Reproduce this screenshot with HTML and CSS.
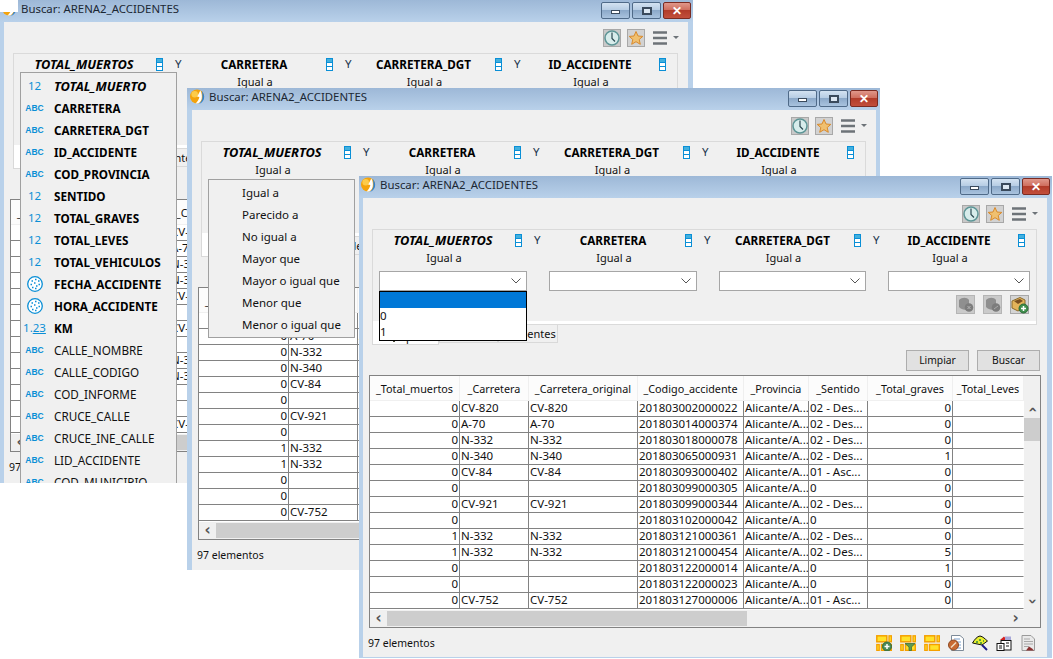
FILE: index.html
```html
<!DOCTYPE html>
<html lang="es">
<head>
<meta charset="utf-8">
<title>Buscar: ARENA2_ACCIDENTES</title>
<link rel="stylesheet" href="styles.css">
</head>
<body>
<svg class="defs" width="0" height="0" aria-hidden="true">
  <defs>
    <symbol id="logo" viewBox="0 0 16 16">
      <circle cx="7.500" cy="8" r="7.500" fill="#f4a30c"/>
      <circle cx="5" cy="5.500" r="3.500" fill="#fccb4a"/>
      <path d="M11 1.500 C9.500 4 9 6 7.500 8 L10 8.500 C9.500 11 8 13.500 6 15.500 C10 15.500 12 13 12.500 10 C13 7 12.500 4 11 1.500Z" fill="#fff"/>
      <path d="M12.500 2 C15.500 5 16 10 13.500 13 C12.500 14.500 11 15.500 9.500 15.800 C12 14 13.200 11.500 13.300 8.500 C13.300 6 13 4 12.500 2Z" fill="#2d82d6"/>
    </symbol>
    <symbol id="clock" viewBox="0 0 18 18">
      <rect x=".5" y=".5" width="17" height="17" fill="#c9c9c9" stroke="#a8a8a8"/>
      <circle cx="9" cy="9" r="7" fill="#d7eceb" stroke="#5d9596" stroke-width="1.500"/>
      <path d="M9 3.500 V9.500 L12 12.500" fill="none" stroke="#2c4a52" stroke-width="1.200"/>
    </symbol>
    <symbol id="star" viewBox="0 0 18 18">
      <rect x=".5" y=".5" width="17" height="17" fill="#d2d2d2" stroke="#a8a8a8"/>
      <path d="M9 2.500 L11 7 L15.800 7.400 L12.200 10.500 L13.300 15.300 L9 12.700 L4.700 15.300 L5.800 10.500 L2.200 7.400 L7 7Z" fill="#f0c070" stroke="#d98a2c"/>
    </symbol>
    <symbol id="menu" viewBox="0 0 26 14">
      <path d="M0 1.500 H14 M0 7 H14 M0 12.500 H14" stroke="#6d7378" stroke-width="2.400"/>
      <path d="M20 5 H26 L23 8Z" fill="#6d7378"/>
    </symbol>
    <symbol id="order" viewBox="0 0 7 13">
      <rect x=".5" y=".5" width="6" height="12" fill="#fff" stroke="#0a8fd6"/>
      <rect x="1" y="1" width="5" height="3.500" fill="#42b0de"/>
      <path d="M1 4.500 H6 M1 8.500 H6" stroke="#0a8fd6"/>
    </symbol>
    <symbol id="chev" viewBox="0 0 10 6">
      <path d="M.5 .5 L5 5 L9.500 .5" fill="none" stroke="#555"/>
    </symbol>
    <symbol id="date" viewBox="0 0 16 16">
      <circle cx="8" cy="8" r="7.300" fill="#fff" stroke="#0a8fd6" stroke-width="1.300"/>
      <path d="M4.500 5 h1.500 M8 3.500 h1.500 M11 5 h1.500 M3.500 8.500 h1.500 M7 7 h1.500 M9 10 h1.500 M11.500 8.500 h1.500 M5 11.500 h1.500 M8 12.500 h1.500" stroke="#0a8fd6" stroke-width="1.500"/>
    </symbol>
    <symbol id="dbdel" viewBox="0 0 19 19">
      <rect x=".5" y=".5" width="18" height="18" fill="#cacaca" stroke="#b5b5b5"/>
      <path d="M3 5 C6 2 11 2 13 5 V13 C10 16 6 15 3 12Z" fill="#8f8f8f"/>
      <circle cx="13" cy="12.500" r="4.300" fill="#7c7c7c"/>
      <path d="M11.500 11 L14.500 14 M14.500 11 L11.500 14" stroke="#b5b5b5"/>
    </symbol>
    <symbol id="dbedit" viewBox="0 0 19 19">
      <rect x=".5" y=".5" width="18" height="18" fill="#cacaca" stroke="#b5b5b5"/>
      <path d="M3 5 C6 2 11 2 13 5 V13 C10 16 6 15 3 12Z" fill="#8f8f8f"/>
      <circle cx="13" cy="12.500" r="4.300" fill="#7c7c7c"/>
      <path d="M11 14 L15 11" stroke="#aaa"/>
    </symbol>
    <symbol id="dbadd" viewBox="0 0 19 19">
      <rect x=".5" y=".5" width="18" height="18" fill="#d4d4d4" stroke="#a8a8a8"/>
      <path d="M2 6 L10 2.500 L15 5 V12 L8 16 L2 13Z" fill="#e3b35a" stroke="#8a6a2a"/>
      <path d="M4 6 L10 4 L13 6 L8 9Z" fill="#7a4f20"/>
      <circle cx="13.500" cy="13.500" r="4.500" fill="#3f8f4c" stroke="#2a6b38"/>
      <path d="M13.500 11 V16 M11 13.500 H16" stroke="#fff" stroke-width="1.500"/>
    </symbol>
    <symbol id="tabicon" viewBox="0 0 16 14">
      <rect x="1" y="2" width="13" height="10" fill="#f3e9b0" stroke="#8a7a3a"/>
      <rect x="0" y="7" width="2" height="1" fill="#f2df6a"/>
      <rect x="14" y="12" width="2" height="2" fill="#4a4a3a"/>
    </symbol>
    <symbol id="lay" viewBox="0 0 16 16">
      <rect x=".8" y=".8" width="10" height="6" fill="#ffe22a" stroke="#f5a000" stroke-width="1.500"/>
      <rect x="13" y=".8" width="2.400" height="6" fill="#ffe22a" stroke="#f5a000" stroke-width="1.300"/>
      <rect x=".8" y="9.500" width="2.400" height="6" fill="#ffe22a" stroke="#f5a000" stroke-width="1.300"/>
      <rect x="5.500" y="9.500" width="9.800" height="6" fill="#ffe22a" stroke="#f5a000" stroke-width="1.500"/>
    </symbol>
    <symbol id="layadd" viewBox="0 0 16 16">
      <use href="#lay"/>
      <circle cx="11" cy="11.500" r="4.500" fill="#4c8a58" stroke="#2f6a3e"/>
      <path d="M11 9 V14 M8.500 11.500 H13.500" stroke="#fff" stroke-width="1.500"/>
    </symbol>
    <symbol id="layfil" viewBox="0 0 16 16">
      <use href="#lay"/>
      <path d="M5 8.500 H15 L11.500 12 V15.500 H9 V12Z" fill="#5f9a52" stroke="#3f7238" stroke-width=".8"/>
    </symbol>
    <symbol id="report" viewBox="0 0 16 16">
      <path d="M3.500 .5 H12 L15.500 3.500 V15.500 H3.500Z" fill="#fff" stroke="#7d8a98"/>
      <path d="M6 4 H12 M8 7 H13 M9 10 H13 M8 13 H13" stroke="#7aa0cc"/>
      <circle cx="5.500" cy="10" r="5" fill="#c96a32" stroke="#8d4a24"/>
      <path d="M3 12.500 L8 7.500" stroke="#f0e0c8" stroke-width="1.500"/>
    </symbol>
    <symbol id="find" viewBox="0 0 16 16">
      <path d="M.5 8 C3 4 5 1.500 8 1 C11 1.500 13 4 15.500 6 L10 10 Z" fill="#e8ef30" stroke="#111"/>
      <path d="M4 7 h2 M7 5 h2 M8 8 h2 M11 6 h1" stroke="#2f8a3e" stroke-width="1.400"/>
      <path d="M10 10 L15 15" stroke="#1a1a8a" stroke-width="2"/>
    </symbol>
    <symbol id="map" viewBox="0 0 16 16">
      <path d="M4 5 L8 1.500 L11 5Z" fill="#d32020"/>
      <rect x="9" y="1.500" width="6" height="4" fill="#a8a8d8"/>
      <rect x="5" y="5.500" width="10" height="9.500" fill="#fff" stroke="#111"/>
      <rect x="1" y="8.500" width="7" height="7" fill="#fff" stroke="#111"/>
      <path d="M3 11 h3 M3 13 h3 M10 8 h3 M10 11 h3" stroke="#111"/>
    </symbol>
    <symbol id="sheet" viewBox="0 0 16 16">
      <path d="M2 .5 H11 L14.500 4 V15.500 H2Z" fill="#e9e9e9" stroke="#9a9a9a"/>
      <path d="M4 4 H10 M4 6.500 H13 M4 9 H13 M4 11.500 H9" stroke="#a8a8a8"/>
      <path d="M6 15.500 L9 11.500 L12 13.500 L14 15.500Z" fill="#8a2f2f"/>
    </symbol>
  </defs>
</svg>

<section class="window win-a">
  <div class="redact"></div>
  <header class="titlebar">
    <svg class="logo"><use href="#logo"/></svg>
    <span class="title">Buscar: ARENA2_ACCIDENTES</span>
    <span class="ctrl"><i class="glyph-min"></i></span>
    <span class="ctrl"><i class="glyph-max"></i></span>
    <span class="ctrl close"><i class="glyph-x">✕</i></span>
  </header>
  <div class="body">
    <div class="toolbar">
      <svg class="tool"><use href="#clock"/></svg>
      <svg class="tool"><use href="#star"/></svg>
      <svg class="tool-menu"><use href="#menu"/></svg>
    </div>
    <div class="panel">
      <div class="filters">
        <div class="filter"><div class="fhead"><b class="fname key">TOTAL_MUERTOS</b><svg class="order"><use href="#order"/></svg></div><div class="op">Igual a</div></div>
        <span class="and">Y</span>
        <div class="filter"><div class="fhead"><b class="fname">CARRETERA</b><svg class="order"><use href="#order"/></svg></div><div class="op">Igual a</div></div>
        <span class="and">Y</span>
        <div class="filter"><div class="fhead"><b class="fname">CARRETERA_DGT</b><svg class="order"><use href="#order"/></svg></div><div class="op">Igual a</div></div>
        <span class="and">Y</span>
        <div class="filter"><div class="fhead"><b class="fname">ID_ACCIDENTE</b><svg class="order"><use href="#order"/></svg></div><div class="op">Igual a</div></div>
      </div>
    </div>
    <div class="tabs"><span class="tab on"><svg class="tabicon"><use href="#tabicon"/></svg>Tipo</span><span class="tab">Avanzado</span><span class="tab">Accidentes</span></div>
    <div class="actions"><span class="btn">Limpiar</span><span class="btn">Buscar</span></div>
    <div class="grid">
      <div class="grid-main">
        <table class="data">
          <colgroup><col class="c1"><col class="c2"><col class="c3"></colgroup>
          <thead><tr><th>_Total_muertos</th><th>_Carretera</th><th>_Carretera_original</th></tr></thead>
          <tbody>
            <tr><td class="n">0</td><td>CV-820</td><td>CV-820</td></tr>
            <tr><td class="n">0</td><td>A-70</td><td>A-70</td></tr>
            <tr><td class="n">0</td><td>N-332</td><td>N-332</td></tr>
            <tr><td class="n">0</td><td>N-340</td><td>N-340</td></tr>
            <tr><td class="n">0</td><td>CV-84</td><td>CV-84</td></tr>
            <tr><td class="n">0</td><td></td><td></td></tr>
            <tr><td class="n">0</td><td>CV-921</td><td>CV-921</td></tr>
            <tr><td class="n">0</td><td></td><td></td></tr>
            <tr><td class="n">1</td><td>N-332</td><td>N-332</td></tr>
            <tr><td class="n">1</td><td>N-332</td><td>N-332</td></tr>
            <tr><td class="n">0</td><td></td><td></td></tr>
            <tr><td class="n">0</td><td></td><td></td></tr>
            <tr><td class="n">0</td><td>CV-752</td><td>CV-752</td></tr>
          </tbody>
        </table>
      </div>
      <div class="hscroll"><span class="arrow">‹</span><span class="thumb"></span></div>
    </div>
    <div class="status"><span>97 elementos</span></div>
  </div>
  <ul class="menu menu-fields">
    <li class="key"><i class="num">12</i>TOTAL_MUERTO</li>
    <li class="strong"><i class="abc">ABC</i>CARRETERA</li>
    <li class="strong"><i class="abc">ABC</i>CARRETERA_DGT</li>
    <li class="strong"><i class="abc">ABC</i>ID_ACCIDENTE</li>
    <li class="strong"><i class="abc">ABC</i>COD_PROVINCIA</li>
    <li class="strong"><i class="num">12</i>SENTIDO</li>
    <li class="strong"><i class="num">12</i>TOTAL_GRAVES</li>
    <li class="strong"><i class="num">12</i>TOTAL_LEVES</li>
    <li class="strong"><i class="num">12</i>TOTAL_VEHICULOS</li>
    <li class="strong"><i class="ico"><svg class="date"><use href="#date"/></svg></i>FECHA_ACCIDENTE</li>
    <li class="strong"><i class="ico"><svg class="date"><use href="#date"/></svg></i>HORA_ACCIDENTE</li>
    <li class="strong"><i class="num">1.<u>23</u></i>KM</li>
    <li><i class="abc">ABC</i>CALLE_NOMBRE</li>
    <li><i class="abc">ABC</i>CALLE_CODIGO</li>
    <li><i class="abc">ABC</i>COD_INFORME</li>
    <li><i class="abc">ABC</i>CRUCE_CALLE</li>
    <li><i class="abc">ABC</i>CRUCE_INE_CALLE</li>
    <li><i class="abc">ABC</i>LID_ACCIDENTE</li>
    <li><i class="abc">ABC</i>COD_MUNICIPIO</li>
  </ul>
</section>

<section class="window win-b">
  <header class="titlebar">
    <svg class="logo"><use href="#logo"/></svg>
    <span class="title">Buscar: ARENA2_ACCIDENTES</span>
    <span class="ctrl"><i class="glyph-min"></i></span>
    <span class="ctrl"><i class="glyph-max"></i></span>
    <span class="ctrl close"><i class="glyph-x">✕</i></span>
  </header>
  <div class="body">
    <div class="toolbar">
      <svg class="tool"><use href="#clock"/></svg>
      <svg class="tool"><use href="#star"/></svg>
      <svg class="tool-menu"><use href="#menu"/></svg>
    </div>
    <div class="panel">
      <div class="filters">
        <div class="filter"><div class="fhead"><b class="fname key">TOTAL_MUERTOS</b><svg class="order"><use href="#order"/></svg></div><div class="op">Igual a</div></div>
        <span class="and">Y</span>
        <div class="filter"><div class="fhead"><b class="fname">CARRETERA</b><svg class="order"><use href="#order"/></svg></div><div class="op">Igual a</div></div>
        <span class="and">Y</span>
        <div class="filter"><div class="fhead"><b class="fname">CARRETERA_DGT</b><svg class="order"><use href="#order"/></svg></div><div class="op">Igual a</div></div>
        <span class="and">Y</span>
        <div class="filter"><div class="fhead"><b class="fname">ID_ACCIDENTE</b><svg class="order"><use href="#order"/></svg></div><div class="op">Igual a</div></div>
      </div>
    </div>
    <div class="tabs"><span class="tab on"><svg class="tabicon"><use href="#tabicon"/></svg>Tipo</span><span class="tab">Avanzado</span><span class="tab">Accidentes</span></div>
    <div class="actions"><span class="btn">Limpiar</span><span class="btn">Buscar</span></div>
    <div class="grid">
      <div class="grid-main">
        <table class="data">
          <colgroup><col class="c1"><col class="c2"><col class="c3"></colgroup>
          <thead><tr><th>_Total_muertos</th><th>_Carretera</th><th>_Carretera_original</th></tr></thead>
          <tbody>
            <tr><td class="n">0</td><td>CV-820</td><td>CV-820</td></tr>
            <tr><td class="n">0</td><td>A-70</td><td>A-70</td></tr>
            <tr><td class="n">0</td><td>N-332</td><td>N-332</td></tr>
            <tr><td class="n">0</td><td>N-340</td><td>N-340</td></tr>
            <tr><td class="n">0</td><td>CV-84</td><td>CV-84</td></tr>
            <tr><td class="n">0</td><td></td><td></td></tr>
            <tr><td class="n">0</td><td>CV-921</td><td>CV-921</td></tr>
            <tr><td class="n">0</td><td></td><td></td></tr>
            <tr><td class="n">1</td><td>N-332</td><td>N-332</td></tr>
            <tr><td class="n">1</td><td>N-332</td><td>N-332</td></tr>
            <tr><td class="n">0</td><td></td><td></td></tr>
            <tr><td class="n">0</td><td></td><td></td></tr>
            <tr><td class="n">0</td><td>CV-752</td><td>CV-752</td></tr>
          </tbody>
        </table>
      </div>
      <div class="hscroll"><span class="arrow">‹</span><span class="thumb"></span></div>
    </div>
    <div class="status"><span>97 elementos</span></div>
  </div>
  <ul class="menu menu-ops">
    <li>Igual a</li>
    <li>Parecido a</li>
    <li>No igual a</li>
    <li>Mayor que</li>
    <li>Mayor o igual que</li>
    <li>Menor que</li>
    <li>Menor o igual que</li>
  </ul>
</section>

<section class="window win-c">
  <header class="titlebar">
    <svg class="logo"><use href="#logo"/></svg>
    <span class="title">Buscar: ARENA2_ACCIDENTES</span>
    <span class="ctrl"><i class="glyph-min"></i></span>
    <span class="ctrl"><i class="glyph-max"></i></span>
    <span class="ctrl close"><i class="glyph-x">✕</i></span>
  </header>
  <div class="body">
    <div class="toolbar">
      <svg class="tool"><use href="#clock"/></svg>
      <svg class="tool"><use href="#star"/></svg>
      <svg class="tool-menu"><use href="#menu"/></svg>
    </div>
    <div class="panel">
      <div class="filters">
        <div class="filter"><div class="fhead"><b class="fname key">TOTAL_MUERTOS</b><svg class="order"><use href="#order"/></svg></div><div class="op">Igual a</div><div class="combo"><svg class="chev"><use href="#chev"/></svg></div></div>
        <span class="and">Y</span>
        <div class="filter"><div class="fhead"><b class="fname">CARRETERA</b><svg class="order"><use href="#order"/></svg></div><div class="op">Igual a</div><div class="combo"><svg class="chev"><use href="#chev"/></svg></div></div>
        <span class="and">Y</span>
        <div class="filter"><div class="fhead"><b class="fname">CARRETERA_DGT</b><svg class="order"><use href="#order"/></svg></div><div class="op">Igual a</div><div class="combo"><svg class="chev"><use href="#chev"/></svg></div></div>
        <span class="and">Y</span>
        <div class="filter"><div class="fhead"><b class="fname">ID_ACCIDENTE</b><svg class="order"><use href="#order"/></svg></div><div class="op">Igual a</div><div class="combo"><svg class="chev"><use href="#chev"/></svg></div></div>
      </div>
      <div class="dbtools">
        <svg class="db"><use href="#dbdel"/></svg>
        <svg class="db"><use href="#dbedit"/></svg>
        <svg class="db"><use href="#dbadd"/></svg>
      </div>
    </div>
    <div class="tabs"><span class="tab on"><svg class="tabicon"><use href="#tabicon"/></svg>Tipo</span><span class="tab">Avanzado</span><span class="tab">Accidentes</span></div>
    <div class="actions"><span class="btn">Limpiar</span><span class="btn">Buscar</span></div>
    <div class="grid">
      <div class="grid-main">
        <table class="data full">
          <colgroup><col class="c1"><col class="c2"><col class="c3"><col class="c4"><col class="c5"><col class="c6"><col class="c7"><col class="c8"></colgroup>
          <thead><tr><th>_Total_muertos</th><th>_Carretera</th><th>_Carretera_original</th><th>_Codigo_accidente</th><th>_Provincia</th><th>_Sentido</th><th>_Total_graves</th><th>_Total_Leves</th></tr></thead>
          <tbody>
            <tr><td class="n">0</td><td>CV-820</td><td>CV-820</td><td>201803002000022</td><td>Alicante/A...</td><td>02 - Des...</td><td class="n">0</td><td></td></tr>
            <tr><td class="n">0</td><td>A-70</td><td>A-70</td><td>201803014000374</td><td>Alicante/A...</td><td>02 - Des...</td><td class="n">0</td><td></td></tr>
            <tr><td class="n">0</td><td>N-332</td><td>N-332</td><td>201803018000078</td><td>Alicante/A...</td><td>02 - Des...</td><td class="n">0</td><td></td></tr>
            <tr><td class="n">0</td><td>N-340</td><td>N-340</td><td>201803065000931</td><td>Alicante/A...</td><td>02 - Des...</td><td class="n">1</td><td></td></tr>
            <tr><td class="n">0</td><td>CV-84</td><td>CV-84</td><td>201803093000402</td><td>Alicante/A...</td><td>01 - Asc...</td><td class="n">0</td><td></td></tr>
            <tr><td class="n">0</td><td></td><td></td><td>201803099000305</td><td>Alicante/A...</td><td>0</td><td class="n">0</td><td></td></tr>
            <tr><td class="n">0</td><td>CV-921</td><td>CV-921</td><td>201803099000344</td><td>Alicante/A...</td><td>02 - Des...</td><td class="n">0</td><td></td></tr>
            <tr><td class="n">0</td><td></td><td></td><td>201803102000042</td><td>Alicante/A...</td><td>0</td><td class="n">0</td><td></td></tr>
            <tr><td class="n">1</td><td>N-332</td><td>N-332</td><td>201803121000361</td><td>Alicante/A...</td><td>02 - Des...</td><td class="n">0</td><td></td></tr>
            <tr><td class="n">1</td><td>N-332</td><td>N-332</td><td>201803121000454</td><td>Alicante/A...</td><td>02 - Des...</td><td class="n">5</td><td></td></tr>
            <tr><td class="n">0</td><td></td><td></td><td>201803122000014</td><td>Alicante/A...</td><td>0</td><td class="n">1</td><td></td></tr>
            <tr><td class="n">0</td><td></td><td></td><td>201803122000023</td><td>Alicante/A...</td><td>0</td><td class="n">0</td><td></td></tr>
            <tr><td class="n">0</td><td>CV-752</td><td>CV-752</td><td>201803127000006</td><td>Alicante/A...</td><td>01 - Asc...</td><td class="n">0</td><td></td></tr>
          </tbody>
        </table>
        <div class="vscroll"><span class="arrow up">‹</span><span class="vthumb"></span><span class="arrow down">‹</span></div>
      </div>
      <div class="hscroll"><span class="arrow">‹</span><span class="thumb"></span><span class="arrow right">›</span></div>
    </div>
    <div class="status">
      <span>97 elementos</span>
      <div class="status-icons">
        <svg class="sicon"><use href="#layadd"/></svg>
        <svg class="sicon"><use href="#layfil"/></svg>
        <svg class="sicon"><use href="#lay"/></svg>
        <svg class="sicon"><use href="#report"/></svg>
        <svg class="sicon"><use href="#find"/></svg>
        <svg class="sicon"><use href="#map"/></svg>
        <svg class="sicon"><use href="#sheet"/></svg>
      </div>
    </div>
  </div>
  <ul class="dropdown">
    <li class="sel">&nbsp;</li>
    <li>0</li>
    <li>1</li>
  </ul>
</section>
</body>
</html>
```

FILE: styles.css
```css
* { box-sizing: border-box; }
html, body { margin: 0; height: 100%; }
body {
  position: relative;
  overflow: hidden;
  background: #fff;
  font-family: "Noto Sans", "Liberation Sans", sans-serif;
  font-size: 11px;
  color: #111;
}
.defs { position: absolute; }

.window {
  position: absolute;
  width: 693px;
  height: 482px;
  overflow: hidden;
  display: flex;
  flex-direction: column;
  background: #b9d1ea;
}
.win-a { left: 0; top: 0; height: 483px; }
.win-b { left: 187px; top: 88px; }
.win-c { left: 359px; top: 176px; }
.redact { position: absolute; left: 0; top: 0; width: 18px; height: 12px; background: #fff; z-index: 3; }

.titlebar {
  flex: none;
  height: 22px;
  display: flex;
  align-items: flex-start;
  padding-right: 2px;
  background: linear-gradient(#9db8d7, #b9d1ea);
}
.logo { width: 15px; height: 15px; margin: 1px 0 0 2px; flex: none; }
.win-b .logo { margin-left: 3px; }
.title { flex: 1; margin: 1px 0 0 4px; font-size: 11.400px; line-height: 16px; color: #1b2733; }
.ctrl {
  flex: none;
  width: 29px;
  height: 17px;
  margin: 2px 0 0 2px;
  border: 1px solid #4f6a88;
  border-radius: 2px;
  background: linear-gradient(#d3e2f1 0, #b7cde4 45%, #8ca9c9 50%, #a9c3de 100%);
  display: flex;
  align-items: center;
  justify-content: center;
}
.ctrl.close {
  width: 28px;
  border-color: #7a2b22;
  background: linear-gradient(#e0978a 0, #cf6f5f 45%, #b23c2a 50%, #c24f3c 100%);
}
.glyph-min { width: 9px; height: 4px; margin-top: 3px; background: #fff; border: 1px solid #3a4a5c; }
.glyph-max { width: 10px; height: 8px; background: #dce7f2; border: 2px solid #3a4a5c; }
.glyph-x { font-style: normal; font-weight: 700; font-size: 12px; line-height: 12px; color: #fff; }

.body {
  flex: 1;
  min-height: 0;
  margin: 0 5px 0 4px;
  background: #f0f0f0;
  display: flex;
  flex-direction: column;
}
.win-b .body { margin: 0 4px 0 5px; }
.win-c .body { margin-bottom: 1px; }
.toolbar {
  flex: none;
  height: 31px;
  display: flex;
  align-items: flex-start;
  justify-content: flex-end;
  padding: 7px 9px 0 0;
}
.tool { width: 18px; height: 18px; margin-left: 6px; }
.tool-menu { width: 26px; height: 14px; margin: 2px 0 0 8px; }

.panel {
  flex: none;
  height: 96px;
  margin: 0 10px 0 9px;
  border: 1px solid #dadada;
  background: linear-gradient(#f0f0f0 91px, #fff 91px);
}
.filters {
  display: grid;
  grid-template-columns: 148px 22px 148px 22px 147px 22px 142px;
  padding-left: 6px;
}
.filter { min-width: 0; }
.fhead { height: 20px; display: flex; align-items: center; }
.fname { flex: 1; text-align: center; padding-right: 8px; font-size: 11.700px; color: #000; white-space: nowrap; }
.fname.key { font-size: 12.800px; font-style: italic; }
.order { width: 7px; height: 13px; margin-right: 5px; flex: none; }
.op { height: 19px; line-height: 16px; padding-right: 18px; text-align: center; font-size: 11px; }
.and { height: 20px; line-height: 20px; padding-left: 7px; font-size: 11.500px; color: #20344c; }
.combo {
  height: 20px;
  margin-top: 2px;
  border: 1px solid #a6a6a6;
  background: #fff;
  display: flex;
  align-items: center;
  justify-content: flex-end;
  padding-right: 5px;
}
.chev { width: 10px; height: 6px; }
.dbtools { display: flex; justify-content: flex-end; gap: 8px; margin: 4px 7px 0 0; }
.db { width: 19px; height: 19px; }

.tabs { flex: none; height: 20px; display: flex; margin-left: 9px; font-size: 11px; }
.tab {
  width: 59px;
  height: 18px;
  border: 1px solid #d9d9d9;
  border-top: 0;
  text-align: center;
  line-height: 17px;
  white-space: nowrap;
  overflow: hidden;
}
.tab:last-child { width: 60px; }
.tab.on {
  width: 67px;
  height: 24px;
  margin-top: -4px;
  padding: 7px 0 0 6px;
  background: #fff;
  text-align: left;
  display: flex;
  align-items: flex-start;
}
.tabicon { width: 16px; height: 14px; flex: none; margin-right: 2px; }

.actions { flex: none; height: 25px; margin-top: 5px; display: flex; justify-content: flex-end; gap: 8px; padding-right: 7px; }
.btn {
  width: 63px;
  height: 21px;
  border: 1px solid #adadad;
  background: #e1e1e1;
  text-align: center;
  line-height: 19px;
  font-size: 10.300px;
}

.grid {
  flex: none;
  height: 253px;
  margin: 0 6px;
  border: 1px solid #828282;
  background: #f0f0f0;
  display: flex;
  flex-direction: column;
  overflow: hidden;
}
.grid-main { flex: 1; min-height: 0; display: flex; overflow: hidden; background: #fff; }
.data {
  flex: none;
  table-layout: fixed;
  width: 268px;
  border-collapse: separate;
  border-spacing: 0;
  align-self: flex-start;
  font-size: 11.500px;
  color: #111;
}
.data.full { width: 654px; margin-right: -1px; }
.c1 { width: 90px; }
.c2 { width: 69px; }
.c3 { width: 109px; }
.c4 { width: 106px; }
.c5 { width: 65px; }
.c6 { width: 59px; }
.c7 { width: 85px; }
.c8 { width: 71px; }
.data th {
  height: 25px;
  padding: 0;
  background: #fcfcfc;
  border-right: 1px solid #efefef;
  border-bottom: 1px solid #f0f0f0;
  font-size: 10.800px;
  font-weight: 400;
  text-align: center;
  white-space: nowrap;
  overflow: hidden;
}
.data td {
  height: 16px;
  line-height: 14px;
  padding: 0 1px 1px;
  border-right: 1px solid #828282;
  border-bottom: 1px solid #828282;
  white-space: nowrap;
  overflow: hidden;
}
.data td.n { text-align: right; }
.data td:last-child { border-right: 1px solid #fff; }

.vscroll { flex: none; width: 16px; margin-left: auto; padding-top: 25px; background: #f0f0f0; display: flex; flex-direction: column; align-items: stretch; }
.vthumb { flex: none; height: 23px; background: #cdcdcd; }
.hscroll { flex: none; height: 17px; display: flex; align-items: center; background: #f0f0f0; }
.thumb { width: 360px; height: 15px; background: #cdcdcd; }
.arrow { flex: none; width: 17px; text-align: center; font-family: "DejaVu Sans", sans-serif; font-weight: 700; font-size: 15px; line-height: 15px; color: #555; }
.arrow.right { margin-left: auto; margin-right: 16px; }
.arrow.up { width: 16px; height: 17px; line-height: 17px; transform: rotate(90deg); }
.arrow.down { width: 16px; height: 17px; line-height: 17px; margin-top: auto; transform: rotate(-90deg); }

.status { flex: 1; min-height: 0; display: flex; align-items: flex-start; justify-content: space-between; padding: 7px 11px 0 5px; line-height: 16px; font-size: 10.500px; }
.status-icons { display: flex; gap: 8px; }
.sicon { width: 16px; height: 16px; }

.menu {
  position: absolute;
  margin: 0;
  padding: 2px 0;
  list-style: none;
  border: 1px solid #a0a0a0;
  background: #f0f0f0;
  font-size: 11.500px;
  color: #111;
  z-index: 2;
}
.menu li { height: 22px; line-height: 22px; display: flex; align-items: center; white-space: nowrap; }
.menu i { flex: none; width: 33px; font-style: normal; color: #0a8fd6; display: flex; justify-content: center; padding-right: 6px; }
.menu-fields { left: 20px; top: 72px; width: 157px; height: 440px; }
.menu-fields li { font-size: 11.700px; }
.menu-fields li.strong { font-weight: 700; color: #000; }
.menu-fields li.key { font-size: 12.800px; font-weight: 700; font-style: italic; color: #000; }
.menu .num { font-size: 11.500px; font-weight: 400; }
.menu .abc { font-size: 8.500px; font-weight: 700; font-family: "Liberation Sans", sans-serif; }
.menu .ico { height: 16px; }
.date { width: 16px; height: 16px; }
.menu-ops { left: 21px; top: 91px; width: 147px; height: 159px; padding-left: 33px; }

.dropdown {
  position: absolute;
  left: 20px;
  top: 115px;
  width: 148px;
  height: 50px;
  margin: 0;
  padding: 0;
  list-style: none;
  border: 1px solid #000;
  background: #fff;
  font-size: 11.500px;
  color: #111;
  z-index: 2;
}
.dropdown li { height: 16px; line-height: 16px; }
.dropdown .sel { background: #0078d7; }
```
